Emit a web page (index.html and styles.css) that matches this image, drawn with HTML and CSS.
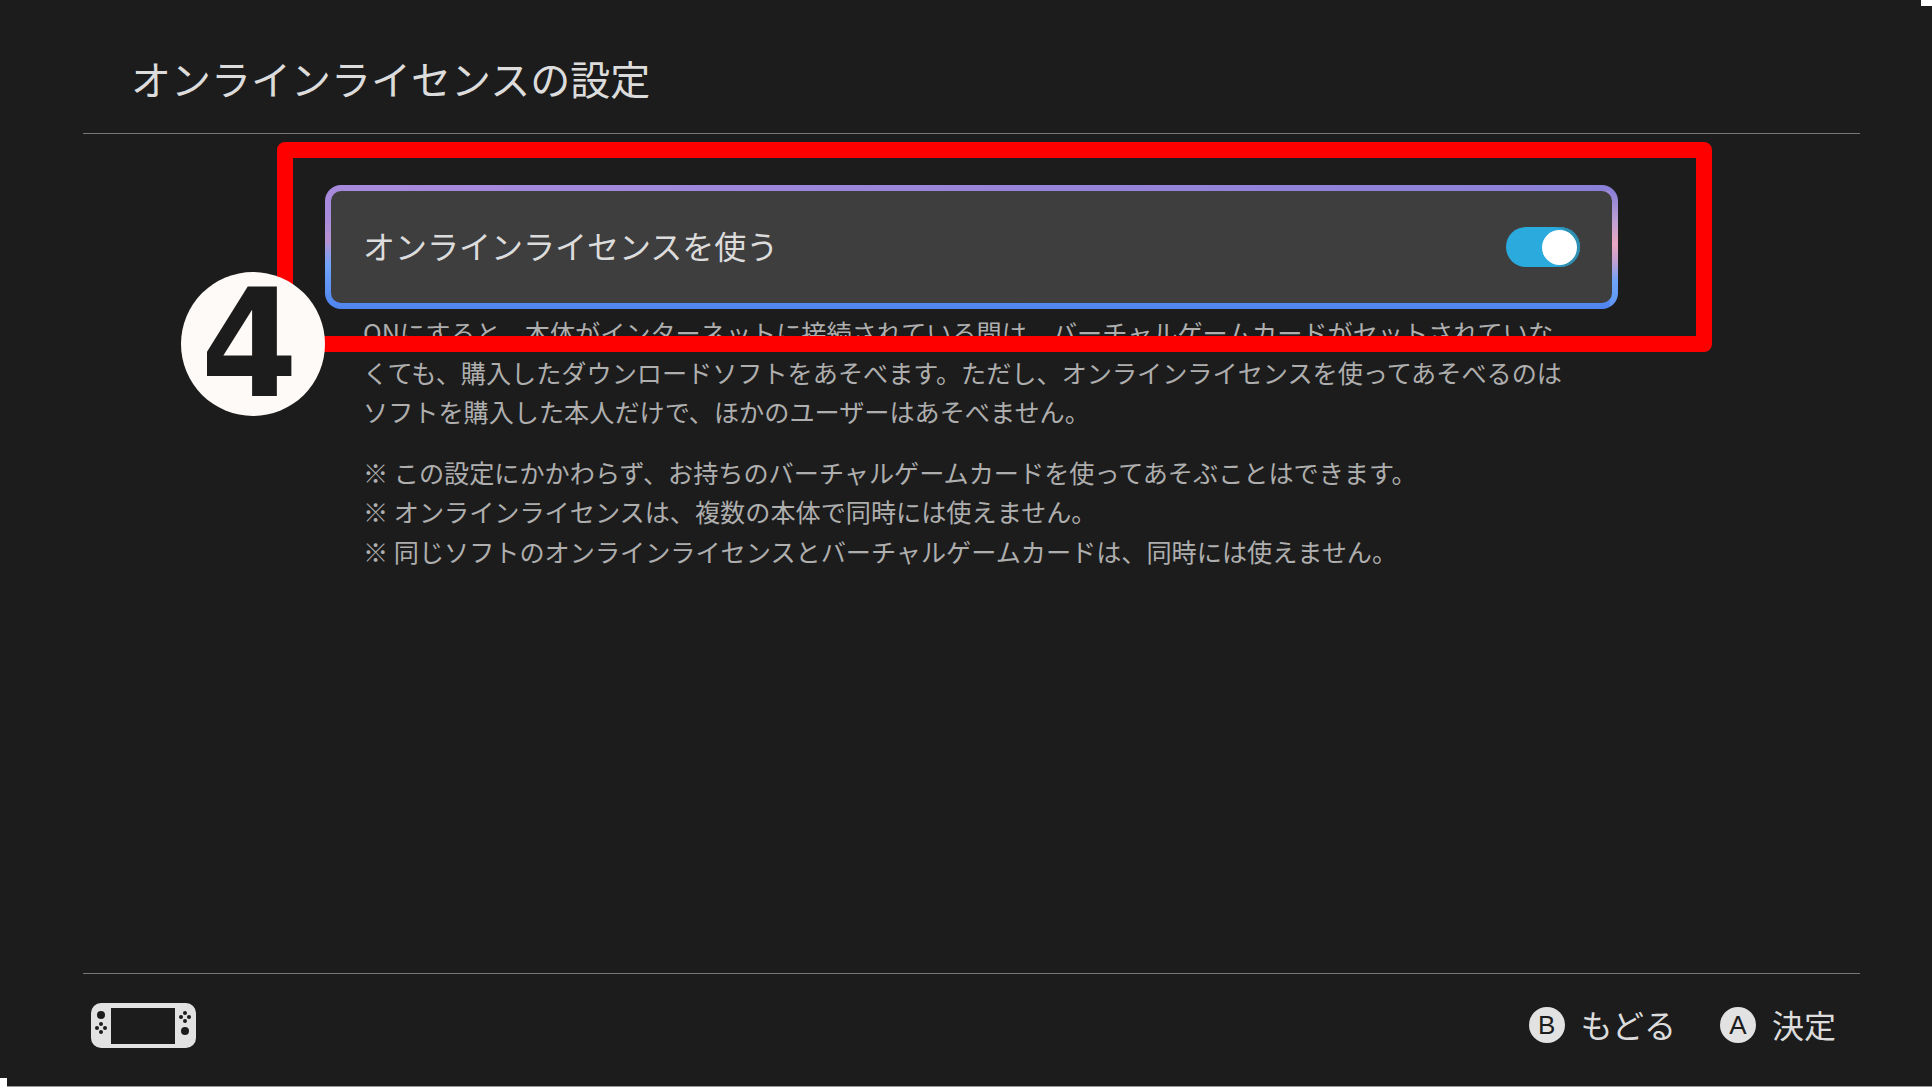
FILE: index.html
```html
<!DOCTYPE html>
<html lang="ja">
<head>
    <meta charset="UTF-8">
    <meta name="viewport" content="width=device-width, initial-scale=1.0">
    <title>オンラインライセンスの設定</title>
    <link rel="stylesheet" href="styles.css">
</head>
<body>
    <div class="screen">
        <header class="top-bar">
            <h1 class="page-title">オンラインライセンスの設定</h1>
        </header>
        <main class="content">
            <div class="setting-card">
                <span class="setting-label">オンラインライセンスを使う</span>
                <span class="toggle"><span class="toggle-knob"></span></span>
            </div>
            <div class="description">
                <p class="para">ONにすると、本体がインターネットに接続されている間は、バーチャルゲームカードがセットされていな<br>くても、購入したダウンロードソフトをあそべます。ただし、オンラインライセンスを使ってあそべるのは<br>ソフトを購入した本人だけで、ほかのユーザーはあそべません。</p>
                <p class="para">※ この設定にかかわらず、お持ちのバーチャルゲームカードを使ってあそぶことはできます。<br>※ オンラインライセンスは、複数の本体で同時には使えません。<br>※ 同じソフトのオンラインライセンスとバーチャルゲームカードは、同時には使えません。</p>
            </div>
        </main>
        <footer class="bottom-bar">
            <svg class="console-icon" width="105" height="45" viewBox="0 0 105 45">
                <rect width="105" height="45" rx="10" fill="#e2e2e2"/>
                <rect x="20" y="5" width="64" height="36" fill="#1c1c1c"/>
                <g fill="#1c1c1c">
                    <circle cx="10" cy="12" r="4"/>
                    <circle cx="10" cy="21" r="2"/>
                    <circle cx="10" cy="29" r="2"/>
                    <circle cx="6" cy="25" r="2"/>
                    <circle cx="14" cy="25" r="2"/>
                    <circle cx="94" cy="10" r="2"/>
                    <circle cx="94" cy="18" r="2"/>
                    <circle cx="90" cy="14" r="2"/>
                    <circle cx="98" cy="14" r="2"/>
                    <circle cx="94" cy="28" r="4"/>
                </g>
            </svg>
            <div class="button-hints">
                <div class="hint"><span class="btn-badge">B</span><span class="hint-label">もどる</span></div>
                <div class="hint"><span class="btn-badge">A</span><span class="hint-label">決定</span></div>
            </div>
        </footer>
    </div>
    <div class="corner-top"></div>
    <div class="corner-bottom"></div>
    <div class="callout-box"></div>
    <div class="step-badge"><span class="step-num">4</span></div>
</body>
</html>
```

FILE: styles.css
```css
html, body {
    margin: 0;
    padding: 0;
}
body {
    position: relative;
    width: 1932px;
    height: 1092px;
    overflow: hidden;
    background: #fff;
    font-family: "Noto Sans CJK JP", "Liberation Sans", sans-serif;
    color: #dcdcdc;
}
.screen {
    display: flex;
    flex-direction: column;
    height: 1087px;
    padding: 0 72px 0 83px;
    box-sizing: border-box;
    background: #1c1c1c;
    border-bottom: 1px solid #999;
}
.top-bar {
    display: flex;
    align-items: center;
    height: 134px;
    padding: 22px 0 0 48px;
    box-sizing: border-box;
    border-bottom: 1px solid #777;
}
.page-title {
    margin: 0;
    font-size: 40px;
    font-weight: 400;
}
.content {
    flex: 1;
    padding: 51px 242px 0 242px;
}
.setting-card {
    display: flex;
    justify-content: space-between;
    align-items: center;
    height: 124px;
    padding: 0 32px 5px 32px;
    box-sizing: border-box;
    border: 6px solid transparent;
    border-radius: 16px;
    background:
        linear-gradient(#3e3e3e, #3e3e3e) padding-box,
        linear-gradient(to right, #a78adc, #8a80d8) top / 100% 6px no-repeat border-box,
        linear-gradient(#8a80d8 5%, #c0a0d4 30%, #eaa8c0 48%, #c0a0d4 62%, #6ea4f8 78%, #5c94f0 100%) right / 8px 100% no-repeat border-box,
        linear-gradient(#a78adc 0%, #a78adc 25%, #b692d0 45%, #6ea4f8 65%, #4f84ee 100%) border-box;
}
.setting-label {
    font-size: 32px;
}
.toggle {
    display: flex;
    justify-content: flex-end;
    align-items: center;
    width: 74px;
    height: 40px;
    margin-top: 5px;
    padding-right: 3px;
    box-sizing: border-box;
    border-radius: 20px;
    background: #2aaadd;
    box-shadow: inset -6px 0 0 #2e8fb0;
}
.toggle-knob {
    width: 35px;
    height: 35px;
    border-radius: 50%;
    background: #fff;
}
.description {
    padding: 4px 0 0 38px;
    font-size: 25.15px;
    line-height: 39.6px;
    color: #aeaeae;
}
.para {
    margin: 0 0 21px;
}
.bottom-bar {
    display: flex;
    justify-content: space-between;
    align-items: center;
    height: 113px;
    padding: 0 24px 10px 8px;
    box-sizing: border-box;
    border-top: 1px solid #777;
}
.button-hints {
    display: flex;
    gap: 44px;
}
.hint {
    display: flex;
    align-items: center;
    gap: 16px;
    font-size: 32px;
}
.hint-label {
    margin-top: -3px;
}
.btn-badge {
    display: flex;
    justify-content: center;
    align-items: center;
    width: 36px;
    height: 36px;
    border-radius: 50%;
    background: #e2e2e2;
    color: #1c1c1c;
    font-family: "Liberation Sans", sans-serif;
    font-size: 26px;
}
.corner-top {
    position: absolute;
    top: 0;
    right: 0;
    width: 11px;
    height: 6px;
    background: #fff;
}
.corner-bottom {
    position: absolute;
    left: 0;
    top: 1078px;
    width: 7px;
    height: 9px;
    background: #fff;
}
.callout-box {
    position: absolute;
    left: 277px;
    top: 142px;
    width: 1435px;
    height: 210px;
    box-sizing: border-box;
    border: 16px solid #f00;
    border-radius: 8px;
}
.step-badge {
    position: absolute;
    left: 181px;
    top: 272px;
    width: 144px;
    height: 144px;
    padding-right: 7px;
    box-sizing: border-box;
    display: flex;
    justify-content: center;
    align-items: center;
    border-radius: 50%;
    background: #fefaf8;
    color: #1c1c1c;
    font-family: "DejaVu Sans", sans-serif;
    font-weight: 700;
    font-size: 150px;
    line-height: 1;
}
.step-num {
    transform: scaleX(0.93);
}
```
